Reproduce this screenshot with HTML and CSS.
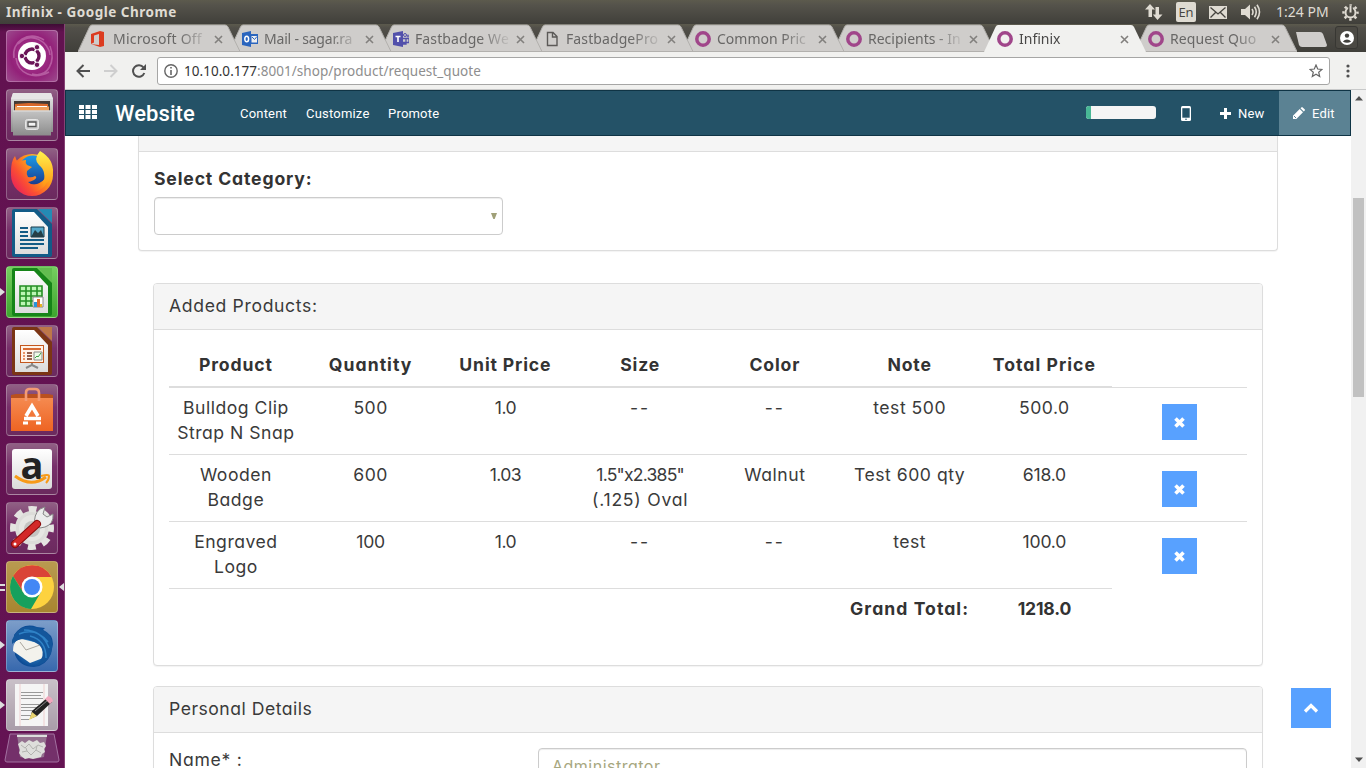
FILE: index.html
```html
<!DOCTYPE html>
<html lang="en">
<head>
<meta charset="utf-8">
<title>Infinix</title>
<link rel="stylesheet" href="styles.css">
</head>
<body>
<svg class="defs" aria-hidden="true">
  <defs>
    <linearGradient id="gray" x1="0" y1="0" x2="0" y2="1"><stop offset="0" stop-color="#c4c4c4"/><stop offset="1" stop-color="#8c8c8c"/></linearGradient>
    <linearGradient id="graytop" x1="0" y1="0" x2="0" y2="1"><stop offset="0" stop-color="#e8e8e8"/><stop offset=".3" stop-color="#cfcfcf"/><stop offset="1" stop-color="#8c8c8c"/></linearGradient>
    <linearGradient id="paper" x1="0" y1="0" x2="0" y2="1"><stop offset="0" stop-color="#fff"/><stop offset="1" stop-color="#dcdcdc"/></linearGradient>
    <linearGradient id="fox" x1="1" y1="0" x2="0" y2=".8"><stop offset="0" stop-color="#fff04a"/><stop offset=".4" stop-color="#ff9a1a"/><stop offset=".7" stop-color="#fb5032"/><stop offset="1" stop-color="#e8205a"/></linearGradient>
    <linearGradient id="flame" x1="0" y1="0" x2="0" y2="1"><stop offset="0" stop-color="#fff34d"/><stop offset="1" stop-color="#ff9a16"/></linearGradient>
    <linearGradient id="globe" x1="0" y1="0" x2="0" y2="1"><stop offset="0" stop-color="#1c9be8"/><stop offset="1" stop-color="#1a3c8f"/></linearGradient>
    <linearGradient id="bag" x1="0" y1="0" x2="0" y2="1"><stop offset="0" stop-color="#f58a50"/><stop offset="1" stop-color="#ee6423"/></linearGradient>
    <radialGradient id="bird"><stop offset="0" stop-color="#4ba3dc"/><stop offset="1" stop-color="#0c4b95"/></radialGradient>
    <g id="x"><path d="M1 1l7 7M8 1l-7 7" stroke="#82807e" stroke-width="1.6" fill="none"/></g>
    <path id="shape" d="M0 28L11.500 3Q12.500 1 14 1H147Q149 1 150 3L162 28Z"/>
    <path id="edge" d="M0 27.500L11.500 3Q12.500 1 14 1H147Q149 1 150 3L162 27.500Z"/>
  </defs>
</svg>

<header class="panelbar">
  <span class="win-title">Infinix - Google Chrome</span>
  <div class="tray">
    <svg class="t-net" width="18" height="16" viewBox="0 0 18 16"><path d="M5 0l5 5.500H7V13H3.500V5.500H0ZM10.500 3H14v7.500h3.500L12.500 16 7.800 10.500h2.700Z" fill="#dfdbd2"/></svg>
    <span class="t-en">En</span>
    <svg class="t-mail" width="18" height="13" viewBox="0 0 18 13"><rect width="18" height="13" fill="#dfdbd2"/><path d="M1.500 1.500L9 8l7.500-6.500M1.500 11.500l5-5M16.500 11.500l-5-5" stroke="#45433e" fill="none" stroke-width="1.300"/></svg>
    <svg class="t-vol" width="20" height="16" viewBox="0 0 20 16"><path d="M0 5h4l5-4.500v15L4 11H0Z" fill="#dfdbd2"/><path d="M11 5q2 3 0 6M13.500 2.800q3.500 5.200 0 10.400M16 .8q5 7.200 0 14.400" stroke="#dfdbd2" stroke-width="1.600" fill="none"/></svg>
    <span class="t-time">1:24 PM</span>
    <svg class="t-gear" width="17" height="17" viewBox="0 0 17 17"><circle cx="8.500" cy="8.500" r="7" fill="none" stroke="#dfdbd2" stroke-width="2.400" stroke-dasharray="2.500 2.998" stroke-dashoffset="1.250"/><circle cx="8.500" cy="8.500" r="5" fill="none" stroke="#dfdbd2" stroke-width="2"/><path d="M8.500 1.500v6.500" stroke="#48463f" stroke-width="4.600"/><path d="M8.500 1.500v7" stroke="#dfdbd2" stroke-width="2"/></svg>
  </div>
</header>

<div class="desk">
  <nav class="launcher">
    <div class="tile ubuntu"><svg viewBox="0 0 52 52"><path d="M8 28C5 12 22 0 38 10M26 44C42 48 50 32 44 16M12 14C25 0 43 12 44 25M10 28c2 16 18 22 33 14" stroke="#d692c6" stroke-width="1.600" opacity=".5" fill="none"/><circle cx="26" cy="26" r="14" fill="#fff"/><circle cx="26" cy="26" r="7" fill="none" stroke="#6a1457" stroke-width="3.400"/><path d="M21 26h-7M28.500 21.700l3-5M28.500 30.300l3 5" stroke="#fff" stroke-width="1.600"/><g fill="#6a1457" stroke="#fff" stroke-width=".9"><circle cx="15.900" cy="26" r="2.700"/><circle cx="31" cy="17.200" r="2.700"/><circle cx="31" cy="34.800" r="2.700"/></g></svg></div>
    <div class="tile"><svg viewBox="0 0 52 52"><path d="M7 4h38l2 6v33H5V10Z" fill="url(#graytop)"/><path d="M5 10l2-6h38l2 6Z" fill="#e6e6e6"/><path d="M8 12h36v11H8z" fill="#443b36"/><path d="M9 15l14-1 19 1v8H9z" fill="#d9682a"/><path d="M9 17.500h34v5H9z" fill="#f0a05a"/><path d="M11 17.500h30" stroke="#fff"/><path d="M7 21.500h38v25H7z" fill="url(#gray)"/><path d="M7 22h38" stroke="#e0e0e0"/><rect x="19.500" y="30.500" width="13" height="10" rx="2" fill="#cfcfcf" stroke="#e6e6e6"/><path d="M22 33h8v4.500h-8z" fill="#f4f4f4" stroke="#555" stroke-width="1.300"/></svg></div>
    <div class="tile"><svg viewBox="0 0 52 52"><circle cx="26" cy="27" r="21" fill="url(#fox)"/><circle cx="27" cy="22" r="14.500" fill="url(#globe)"/><path d="M5 24Q5 13 9 8q1 4 3 6 4-2 8-2-1 3 1 5l5 2-5 4q-1 3 1 6 4 1 7-1 3 1-1 4-4 2-6 2 4 4 10 2 5-2 7-5 3 6-4 10-5 4-14 4Q8 43 5 24Z" fill="url(#fox)"/><path d="M34 3q-7 8-1 14 8 6 4 20 9-4 10-12Q48 11 34 3Z" fill="url(#flame)"/></svg></div>
    <div class="tile"><svg viewBox="0 0 52 52"><path d="M6 4q0-2 2-2h23l15 15v31q0 2-2 2H8q-2 0-2-2Z" fill="#125b87"/><path d="M32 2h14v14Z" fill="#248bb4"/><path d="M9 5h19l14 15v27H9Z" fill="url(#paper)"/><path d="M14 21h8M14 25h8M14 29h8M14 33h24M14 37h24M14 41h18" stroke="#135b85" stroke-width="2"/><path d="M25 20h13v10H25z" fill="#54a8ca" stroke="#173a4d"/><path d="M25 30l4-7 3 3 3-3 3 7" fill="#263f47"/></svg></div>
    <div class="tile calc"><svg viewBox="0 0 52 52"><path d="M6 4q0-2 2-2h23l15 15v31q0 2-2 2H8q-2 0-2-2Z" fill="#168418"/><path d="M32 2h14v14Z" fill="#62bc4f"/><path d="M9 5h19l14 15v27H9Z" fill="url(#paper)"/><path d="M14 20h22v20H14z" fill="#bdf6b4"/><path d="M14 20h22v20H14zM14 25h22M14 30h22M14 35h22M20 20v20M25 20v20M31 20v20" stroke="#258f25" stroke-width="1.600" fill="none"/><path d="M27 31h10v10H27z" fill="#fff" stroke="#888"/><path d="M28 41v-5h3v5z" fill="#2894dc"/><path d="M31 41v-8h3v8z" fill="#e26a2d"/><path d="M34 41v-3h2v3z" fill="#e7b525"/></svg></div>
    <div class="tile"><svg viewBox="0 0 52 52"><path d="M6 4q0-2 2-2h23l15 15v31q0 2-2 2H8q-2 0-2-2Z" fill="#7b3515"/><path d="M32 2h14v14Z" fill="#bd7749"/><path d="M9 5h19l14 15v27H9Z" fill="url(#paper)"/><rect x="14.500" y="20.500" width="23" height="17" fill="#fff3e8" stroke="#c3571e"/><path d="M17 24h18" stroke="#d86b33" stroke-width="2"/><path d="M17 28h2M17 31h2M17 34h2" stroke="#e99465" stroke-width="2"/><path d="M21 28h5M21 31h5M21 34h5" stroke="#713117" stroke-width="1.500"/><path d="M28 27h8v8h-8z" fill="#edfae9" stroke="#888"/><path d="M29 33l2-2 1 1 3-4" stroke="#3ba343" fill="none"/><path d="M26 38v2l-6 3M26 40l6 3" stroke="#888" stroke-width="2" fill="none"/></svg></div>
    <div class="tile"><svg viewBox="0 0 52 52"><path d="M5 11l5-1h32l5 1v6H5z" fill="#b9501f"/><path d="M5 14h42v33H5z" fill="url(#bag)"/><path d="M20 17V9q0-4 3-4h6q4 0 4 4v8" stroke="#f39b74" stroke-width="2.600" fill="none"/><path d="M20 32l6-10 6 10M18 34.500h17" stroke="#fff" stroke-width="3.600" fill="none"/><path d="M17 39h5M30 39h5" stroke="#fff" stroke-width="3" fill="none"/></svg></div>
    <div class="tile"><div class="amz">a</div><svg class="smile" viewBox="0 0 52 52"><path d="M9 33q16 12 31 1" stroke="#f79a18" stroke-width="3" fill="none"/><path d="M35 33q8-2 8 0 0 4-3 7" stroke="#f79a18" stroke-width="2" fill="none"/></svg></div>
    <div class="tile"><svg viewBox="0 0 52 52"><circle cx="26" cy="26" r="15" fill="#e6e6e3" stroke="#dcdcd9" stroke-width="4"/><circle cx="26" cy="26" r="19" fill="none" stroke="#e4e4e1" stroke-width="6" stroke-dasharray="8 6.920" stroke-dashoffset="4"/><circle cx="26" cy="27" r="8" fill="#c4c4c2"/><path d="M29 23Q27 13 34 7l5-2-2 7 4 3 6-3q1 10-8 13l-5 1Z" fill="#ececec" stroke="#888"/><path d="M9 42l22-20" stroke="#8a0b0b" stroke-width="8" stroke-linecap="round"/><path d="M9 42l22-20" stroke="#d32929" stroke-width="6" stroke-linecap="round"/><circle cx="9" cy="42" r="1.500" fill="#fff"/></svg></div>
    <div class="tile chrome"><svg viewBox="0 0 52 52"><circle cx="26" cy="26" r="22" fill="#fdd23f"/><path d="M7 15A22 22 0 0 1 45.500 16H26L17 31Z" fill="#da4437"/><path d="M7 15a22 22 0 0 0 18 33l10-17H17Z" fill="#17a05d"/><circle cx="26" cy="26" r="10.500" fill="#fff"/><circle cx="26" cy="26" r="8" fill="#4387f5"/></svg><i class="dbl"></i><i class="arrow-r"></i></div>
    <div class="tile bird"><svg viewBox="0 0 52 52"><path d="M8 15Q17 2 31 7l8 1-2 2q10 4 10 14l-2 10q-5 12-17 13-14 0-19-12Z" fill="url(#bird)"/><path d="M7 31q0-12 9-12l20 5 1 14-13 5Z" fill="#f3f2ec"/><path d="M14 22l6 8 14-5" stroke="#aaa69d" fill="none"/><path d="M6 20l3-6Q17 3 31 8q17 4 15 21-3 14-17 17 8-6 8-14-2-9-14-12-9-3-17 4Z" fill="#14569b"/><path d="M13 14q17-7 29 8M18 10q18 0 25 18M24 16q16 4 16 22" stroke="#2f82c6" stroke-width="1.500" fill="none"/></svg></div>
    <div class="tile edit-app"><svg viewBox="0 0 52 52"><path d="M9 5h33v42H9z" fill="#f5f5f5"/><path d="M14 5v42M38 5v42" stroke="#eec0c0" stroke-width=".7"/><path d="M15 13.500h22M15 16.500h20M15 19.500h22M15 25.500h18M15 28.500h22M15 31.500h14M15 36.500h10M15 40.500h8" stroke="#999"/><path d="M24 40l2-8 15-13 5 4-15 14Z" fill="#222"/><path d="M23 41l3-8 5 4Z" fill="#e7d36f"/><path d="M29 32l13-11" stroke="#888"/><path d="M39 20l3-3q4 1 5 5l-3 3Z" fill="#f2a7bd"/></svg><i class="arrow-l"></i></div>
    <svg class="trash" viewBox="0 0 56 30"><path d="M6 1h44l5 26q0 2-2 2H3q-2 0-2-2Z" fill="#74306a" stroke="#a270a0"/><path d="M13 1h30l-3 23q-12 3-24 0Z" fill="#94718f"/><path d="M13 2h30v2H13z" fill="#ddd"/><path d="M14 11l4-3 3 2 4-3 4 2 4-2 3 3 4-1 2 4-2 3 1 3-3 2-1 3-4 1-4 1-4-1-4 1-4-3-2-3 1-3Z" fill="#dededb"/><path d="M17 12l4 3 4-4 4 5 5-4 5 2M18 19l5-1 4 4 5-5 5 3M22 15l1 3M33 13l-1 4" stroke="#b3b3b0" fill="none"/></svg>
  </nav>

  <main class="browser">
    <div class="tabstrip">
      <div class="tab z8"><svg class="bg" viewBox="0 0 162 28"><use href="#shape"/><use href="#edge"/></svg><svg class="fav" viewBox="0 0 16 16"><path d="M0 3l9-3 4 1v14l-4 1-9-3 8 1V3L3 4.500v7L0 13Z" fill="#dc3c20"/></svg><span class="tt w1">Microsoft Off</span><svg class="close" viewBox="0 0 9 9"><use href="#x"/></svg></div>
      <div class="tab z7"><svg class="bg" viewBox="0 0 162 28"><use href="#shape"/><use href="#edge"/></svg><svg class="fav" viewBox="0 0 16 16"><path d="M0 2l9-2v16l-9-2Z" fill="#2a65be"/><path d="M9 3h7v10H9Z" fill="#2a65be"/><path d="M9.500 5h5.500v6.500H9.500z" fill="#eee"/><path d="M10 6l2.500 2.500L15 5.500" stroke="#2a65be" fill="none"/><ellipse cx="4.700" cy="8" rx="1.900" ry="2.800" fill="none" stroke="#fff" stroke-width="1.500"/></svg><span class="tt w2">Mail - sagar.ra</span><svg class="close" viewBox="0 0 9 9"><use href="#x"/></svg></div>
      <div class="tab z6"><svg class="bg" viewBox="0 0 162 28"><use href="#shape"/><use href="#edge"/></svg><svg class="fav" viewBox="0 0 16 16"><path d="M0 2l10-2v16L0 14Z" fill="#5250ab"/><path d="M2.500 5.500h5M5 5.500V11" stroke="#fff" stroke-width="1.600"/><circle cx="12" cy="4" r="1.500" fill="none" stroke="#5250ab"/><circle cx="15" cy="5" r="1" fill="none" stroke="#5250ab"/><path d="M10 7.500h6v4h-6M10 13h3V8" stroke="#5250ab" fill="none" stroke-width="1.300"/></svg><span class="tt w3">Fastbadge We</span><svg class="close" viewBox="0 0 9 9"><use href="#x"/></svg></div>
      <div class="tab z5"><svg class="bg" viewBox="0 0 162 28"><use href="#shape"/><use href="#edge"/></svg><svg class="fav" viewBox="0 0 16 16"><path d="M3.500 1.500h5.500l4 4v9H3.500ZM8.500 1.500V6H13" stroke="#5c5a58" stroke-width="1.400" fill="none"/></svg><span class="tt w4">FastbadgePro</span><svg class="close" viewBox="0 0 9 9"><use href="#x"/></svg></div>
      <div class="tab z4"><svg class="bg" viewBox="0 0 162 28"><use href="#shape"/><use href="#edge"/></svg><svg class="fav" viewBox="0 0 16 16"><circle cx="8" cy="8" r="6.200" stroke="#a0468a" stroke-width="3.500" fill="none"/></svg><span class="tt w5">Common Pric</span><svg class="close" viewBox="0 0 9 9"><use href="#x"/></svg></div>
      <div class="tab z3"><svg class="bg" viewBox="0 0 162 28"><use href="#shape"/><use href="#edge"/></svg><svg class="fav" viewBox="0 0 16 16"><circle cx="8" cy="8" r="6.200" stroke="#a0468a" stroke-width="3.500" fill="none"/></svg><span class="tt w6">Recipients - In</span><svg class="close" viewBox="0 0 9 9"><use href="#x"/></svg></div>
      <div class="tab active"><svg class="bg" viewBox="0 0 162 28"><use href="#shape"/></svg><svg class="fav" viewBox="0 0 16 16"><circle cx="8" cy="8" r="6.200" stroke="#a0468a" stroke-width="3.500" fill="none"/></svg><span class="tt w7">Infinix</span><svg class="close" viewBox="0 0 9 9"><use href="#x"/></svg></div>
      <div class="tab z1"><svg class="bg" viewBox="0 0 162 28"><use href="#shape"/><use href="#edge"/></svg><svg class="fav" viewBox="0 0 16 16"><circle cx="8" cy="8" r="6.200" stroke="#a0468a" stroke-width="3.500" fill="none"/></svg><span class="tt w8">Request Quo</span><svg class="close" viewBox="0 0 9 9"><use href="#x"/></svg></div>
      <svg class="newtab" width="33" height="15" viewBox="0 0 33 15"><path d="M1 0h24q2 0 3 2l4 11q0 2-2 2H7q-2 0-3-2Z" fill="#cfcdcb"/></svg>
      <div class="profile"><svg width="14" height="14" viewBox="0 0 14 14"><circle cx="7" cy="7" r="7" fill="#fff"/><circle cx="7" cy="4.600" r="2.200" fill="#42413d"/><path d="M2.800 10.500Q7 6.500 11.200 10.500Q7 13 2.800 10.500Z" fill="#42413d"/></svg></div>
    </div>
    <div class="toolbar">
      <svg width="14" height="14" viewBox="0 0 14 14"><path d="M14 7H2M7.500 1L1.500 7l6 6" stroke="#505050" stroke-width="2" fill="none"/></svg>
      <svg width="14" height="14" viewBox="0 0 14 14"><path d="M0 7h12M6.500 1l6 6-6 6" stroke="#cfcfcf" stroke-width="2" fill="none"/></svg>
      <svg width="14" height="14" viewBox="0 0 14 14"><path d="M12.300 9A5.800 5.800 0 1 1 11.500 3.500" stroke="#505050" stroke-width="2" fill="none"/><path d="M14 0v6H8Z" fill="#505050"/></svg>
      <div class="omnibox">
        <svg width="14" height="14" viewBox="0 0 14 14"><circle cx="7" cy="7" r="6.200" fill="none" stroke="#666" stroke-width="1.400"/><path d="M7 6v5M7 3v1.600" stroke="#666" stroke-width="1.600"/></svg>
        <span class="url"><b>10.10.0.177</b>:8001/shop/product/request_quote</span>
        <svg class="star" width="14" height="14" viewBox="0 0 14 14"><path d="M7 1l1.700 4 4.300.4-3.300 2.800 1 4.300L7 10.200l-3.700 2.300 1-4.300L1 5.400 5.300 5Z" stroke="#666" stroke-width="1.200" fill="none"/></svg>
      </div>
      <svg class="dots" width="4" height="14" viewBox="0 0 4 14"><g fill="#505050"><circle cx="2" cy="2" r="1.600"/><circle cx="2" cy="7" r="1.600"/><circle cx="2" cy="12" r="1.600"/></g></svg>
    </div>

    <div class="view">
      <div class="page">
        <nav class="odoo">
          <svg class="apps" width="18" height="14" viewBox="0 0 18 14"><path d="M0 0h5v4H0zM6.500 0h5v4h-5zM13 0h5v4h-5zM0 5h5v4H0zM6.500 5h5v4h-5zM13 5h5v4h-5zM0 10h5v4H0zM6.500 10h5v4h-5zM13 10h5v4h-5z" fill="#fff"/></svg>
          <span class="brand">Website</span>
          <span class="m1">Content</span><span class="m2">Customize</span><span class="m3">Promote</span>
          <div class="right">
            <div class="progress"><i></i></div>
            <svg class="phone" width="10" height="15" viewBox="0 0 10 15"><rect width="10" height="15" rx="1.500" fill="#fff"/><path d="M1.300 2.200h7.400v9.500H1.300z" fill="#245267"/><circle cx="5" cy="13.300" r=".8" fill="#245267"/></svg>
            <svg class="plus" width="11" height="11" viewBox="0 0 11 11"><path d="M4 0h3v4h4v3H7v4H4V7H0V4h4z" fill="#fff"/></svg>
            <span class="new">New</span>
            <div class="editbtn"><svg width="12" height="12" viewBox="0 0 12 12"><path d="M0 12V8.700L6.700 2 10 5.300 3.300 12ZM7.500 1.200 8.300.4q.7-.7 1.400 0l1.900 1.900q.7.700 0 1.400l-.8.800Z" fill="#fff"/><path d="M1 9l2 2" stroke="#5b8293"/></svg><span>Edit</span></div>
          </div>
        </nav>
        <div class="content">
          <section class="card first">
            <div class="card-head"></div>
            <div class="card-body"><label class="cat">Select Category:</label><div class="select"><svg width="6" height="6" viewBox="0 0 6 6"><path d="M0 0h6L3.700 6H2.300Z" fill="#a0a078"/></svg></div></div>
          </section>
          <section class="card added">
            <div class="card-head"><span class="h-added">Added Products:</span></div>
            <div class="table">
              <div class="tr th"><div>Product</div><div class="wide">Quantity</div><div>Unit Price</div><div>Size</div><div>Color</div><div>Note</div><div class="wide">Total Price</div><div class="thin"></div></div>
              <div class="tr"><div>Bulldog Clip<br>Strap N Snap</div><div>500</div><div class="tight">1.0</div><div class="dash">--</div><div class="dash">--</div><div>test 500</div><div>500.0</div><div><button class="del"><svg viewBox="0 0 11 11"><path d="M1.500 1.500l8 8M9.500 1.500l-8 8"/></svg></button></div></div>
              <div class="tr"><div>Wooden<br>Badge</div><div>600</div><div class="tight">1.03</div><div><span class="dim">1.5"x2.385"</span><br><span class="oval">(.125) Oval</span></div><div>Walnut</div><div>Test 600 qty</div><div class="num">618.0</div><div><button class="del"><svg viewBox="0 0 11 11"><path d="M1.500 1.500l8 8M9.500 1.500l-8 8"/></svg></button></div></div>
              <div class="tr"><div>Engraved<br>Logo</div><div class="num">100</div><div class="tight">1.0</div><div class="dash">--</div><div class="dash">--</div><div>test</div><div class="num">100.0</div><div class="open"><button class="del"><svg viewBox="0 0 11 11"><path d="M1.500 1.500l8 8M9.500 1.500l-8 8"/></svg></button></div></div>
              <div class="tr total"><div></div><div></div><div></div><div></div><div></div><div class="wide">Grand Total:</div><div class="num">1218.0</div><div></div></div>
            </div>
          </section>
          <section class="card personal">
            <div class="card-head"><span class="h-pers">Personal Details</span></div>
            <div class="form-row"><span class="name">Name* :</span><div class="input">Administrator</div></div>
          </section>
        </div>
        <a class="totop"><svg width="16" height="10" viewBox="0 0 16 10"><path d="M2 8.500l6-6 6 6" stroke="#fff" stroke-width="3.200" fill="none"/></svg></a>
      </div>
      <div class="scroll"><svg width="8" height="5" viewBox="0 0 8 5"><path d="M0 4.500L4 0l4 4.500Z" fill="#505050"/></svg><i></i><svg width="8" height="5" viewBox="0 0 8 5"><path d="M0 .5h8L4 5Z" fill="#505050"/></svg></div>
    </div>
  </main>
</div>
<i class="run run1"></i><i class="run run2"></i>
</body>
</html>
```
FILE: styles.css
```css
* { box-sizing: border-box; }
body { margin: 0; width: 1366px; height: 768px; overflow: hidden; background: #fff; display: flex; flex-direction: column; font-family: "Open Sans", sans-serif; position: relative; }
svg { display: block; flex: none; }
.defs { position: absolute; width: 0; height: 0; }

/* desktop bar */
.panelbar { height: 24px; flex: none; display: flex; align-items: center; justify-content: space-between; background: linear-gradient(#5c5a4d, #55534b 20%, #403f3a); color: #dfdbd2; padding-left: 6px; }
.win-title { font: bold 13.500px/24px "Noto Sans", sans-serif; letter-spacing: .52px; white-space: nowrap; }
.tray { display: flex; align-items: center; height: 24px; }
.t-net { margin-right: 13px; }
.t-en { width: 20px; height: 20px; background: #dfdbd2; color: #45433e; border-radius: 2px; font-size: 13px; line-height: 20px; text-align: center; margin-right: 13px; }
.t-mail { margin-right: 14px; }
.t-vol { margin-right: 15px; }
.t-time { width: 52px; font: 14px/24px "Noto Sans", sans-serif; white-space: nowrap; letter-spacing: 0; }
.t-gear { margin: 0 7px 0 14px; }

.desk { flex: 1; display: flex; min-height: 0; }

/* launcher */
.launcher { width: 65px; background: linear-gradient(#3e0c35, #621250 8px, #641353); border-right: 1px solid #864275; padding: 6px 0 0 6px; display: flex; flex-direction: column; flex: none; }
.tile { width: 52px; height: 52px; margin-bottom: 7px; flex: none; border-radius: 4px; border: 1px solid rgba(255,255,255,.25); background: linear-gradient(#906084, #772f6a 45%, #6b2a5e); position: relative; }
.tile svg { width: 52px; height: 52px; margin: -1px; }
.ubuntu { background: radial-gradient(circle, #ae3a95, #932179 60%, #9c4a8d); }
.calc { background: linear-gradient(#76ce60, #3da52e); }
.chrome { background: linear-gradient(#b99a50, #a88530); }
.bird { background: linear-gradient(#7c9dc9, #3768ad); }
.edit-app { background: linear-gradient(#c9c0c8, #a99da9); margin-bottom: 2px; }
.amz { width: 40px; height: 40px; margin: 5px; border-radius: 3px; background: linear-gradient(#fff, #dadada); font: bold 38px/30px "Open Sans", sans-serif; text-align: center; color: #222; }
.tile .smile { position: absolute; left: 0; top: 0; }
.trash { width: 56px; height: 30px; margin-left: -2px; }
.arrow-l, .run { position: absolute; left: 0; width: 0; height: 0; border: 4px solid transparent; border-left: 5px solid #ddd; border-right: 0; }
.arrow-l { left: -7px; top: 21px; }
.run1 { top: 288px; }
.run2 { top: 641px; }
.dbl { position: absolute; left: -7px; top: 22px; width: 5px; height: 7px; border-top: 2px solid #ddd; border-bottom: 2px solid #ddd; }
.arrow-r { position: absolute; left: 52px; top: 21px; border: 4px solid transparent; border-right: 5px solid #ddd; border-left: 0; }

/* browser frame */
.browser { flex: 1; min-width: 0; display: flex; flex-direction: column; }
.tabstrip { height: 28px; flex: none; background: linear-gradient(#5c5a4d, #514f49 4px, #403f3a); display: flex; padding-left: 13px; position: relative; }
.tab { width: 151px; height: 28px; flex: none; position: relative; display: flex; align-items: center; padding-left: 13px; isolation: isolate; color: #686766; }
.tab .bg { position: absolute; left: 0; top: 0; width: 162px; height: 28px; z-index: -1; fill: #cfcdcb; }
.bg use:nth-child(2) { fill: none; stroke: #b2b0ad; }
.tab.active { color: #494847; z-index: 9; }
.tab.active .bg { fill: #f1f1ef; }
.z8 { z-index: 8; } .z7 { z-index: 7; } .z6 { z-index: 6; } .z5 { z-index: 5; } .z4 { z-index: 4; } .z3 { z-index: 3; } .z1 { z-index: 1; }
.fav { width: 16px; height: 16px; margin: 2px 6px 0 0; }
.tt { width: 101px; height: 28px; font: 14px/30px "Noto Sans", sans-serif; white-space: nowrap; -webkit-mask-image: linear-gradient(90deg, #000 65px, transparent 98px); mask-image: linear-gradient(90deg, #000 65px, transparent 98px); }
.w1 { letter-spacing: .2px; }
.w2 { letter-spacing: -.2px; }
.w3, .w4, .w8 { letter-spacing: .1px; }
.close { width: 9px; height: 9px; margin: 2px 0 0 0; }
.newtab { margin: 8px 0 0 9px; }
.profile { width: 23px; height: 23px; margin: 2px 0 0 7px; border: 1px solid #383733; border-radius: 3px; background: #4b4943; display: flex; align-items: center; justify-content: center; }
.toolbar { height: 38px; flex: none; display: flex; align-items: center; background: #f1f1ef; border-bottom: 1px solid #c8c9c9; padding: 0 0 0 11px; }
.toolbar > svg { margin-right: 14px; }
.toolbar > svg:nth-child(3) { margin-right: 11px; }
.omnibox { width: 1173px; height: 28px; border: 1px solid #a6a6a5; border-radius: 3px; background: #fff; display: flex; align-items: center; padding: 0 6px; }
.url { font: 13.500px/26px "Noto Sans", sans-serif; letter-spacing: .04px; color: #8e8e8e; margin-left: 6px; white-space: nowrap; }
.url b { font-weight: 400; color: #333; }
.star { margin-left: auto; }
.toolbar > .dots { margin: 0 0 0 16px; }

.view { flex: 1; min-height: 0; display: flex; }
.page { width: 1286px; position: relative; overflow: hidden; }
.scroll { width: 15px; background: #f1f1f1; display: flex; flex-direction: column; align-items: center; padding: 6px 0; }
.scroll i { width: 11px; height: 199px; background: #c1c1c1; margin: 97px 0 auto; }

/* website navbar */
.odoo { height: 46px; background: #245267; border: 1px solid #0f3445; color: #fff; display: flex; align-items: center; font: 13px/44px Roboto, sans-serif; padding-left: 13px; letter-spacing: .2px; }
.apps { margin: -3px 18px 0 0; }
.odoo span { white-space: nowrap; padding-top: 1px; }
.brand { width: 125px; font-size: 22px; letter-spacing: .1px; font-weight: 500; }
.m1 { width: 66px; } .m2 { width: 82px; }
.right { margin-left: auto; display: flex; align-items: center; }
.progress { width: 70px; height: 13px; background: #f5f5f5; border-radius: 3px; overflow: hidden; margin: -2px 25px 0 0; }
.progress i { display: block; width: 5px; height: 13px; background: #48b795; }
.phone { margin-right: 29px; }
.plus { margin-right: 7px; }
.new { width: 41px; }
.editbtn { width: 71px; height: 44px; background: #5b8293; display: flex; align-items: center; padding-left: 14px; gap: 7px; }

/* page content */
.content { font: 17.600px/25px Inter, sans-serif; font-feature-settings: "cv11"; letter-spacing: .5px; color: #3a3a3a; }
.card { border: 1px solid #ddd; border-radius: 4px; box-shadow: 0 1px 1px rgba(0,0,0,.05); background: #fff; }
.card-head { background: #f5f5f5; border-bottom: 1px solid #ddd; height: 46px; padding: 9px 15px; border-radius: 3px 3px 0 0; }
.first { width: 1140px; height: 115px; margin-left: 73px; border-top: 0; border-radius: 0 0 4px 4px; }
.first .card-head { height: 16px; padding: 0; border-radius: 0; }
.card-body { padding: 14px 15px; }
.cat { display: block; font-weight: 700; height: 31px; white-space: nowrap; letter-spacing: .85px; color: #333; }
.select { width: 349px; height: 38px; border: 1px solid #ccc; border-radius: 4px; box-shadow: inset 0 1px 1px rgba(0,0,0,.075); display: flex; align-items: center; justify-content: flex-end; padding-right: 5px; }
.h-added { letter-spacing: .65px; }
.added { width: 1110px; height: 383px; margin: 32px 0 20px 88px; }
.personal { width: 1110px; height: 120px; margin-left: 88px; }
.table { margin: 15px 15px 0; }
.tr { display: grid; grid-template-columns: repeat(8, 134.750px); height: 67px; text-align: center; }
.tr > div { border-bottom: 1px solid #ddd; padding-top: 7px; white-space: nowrap; }
.tr > div:nth-child(-n+7) { padding-right: 1px; }
.th { height: 43px; font-weight: 700; letter-spacing: .85px; color: #333; }
.tr.th > div { border-bottom-width: 2px; }
.tr.th > .thin { border-bottom-width: 1px; }
.tr > .open, .tr.total > div { border-bottom: 0; }
.total { font-weight: 700; color: #333; }
.wide { letter-spacing: 1.050px; }
.num { letter-spacing: -.2px; }
.tight { letter-spacing: -.6px; }
.dash { letter-spacing: 2px; }
.dim { letter-spacing: -.8px; }
.oval { letter-spacing: .75px; }
.del { display: block; width: 35px; height: 36px; border: 0; padding: 0; margin: 9px auto 0; background: #58a1ff; }
.del svg { width: 11px; height: 11px; margin: 0 auto; stroke: #fff; stroke-width: 3.600px; }
.form-row { display: flex; padding: 15px; line-height: 24px; }
.name { width: 369px; height: 20px; letter-spacing: .7px; }
.input { width: 709px; height: 38px; border: 1px solid #ccc; border-radius: 4px; box-shadow: inset 0 1px 1px rgba(0,0,0,.075); padding: 5px 13px; color: #a7a780; font-size: 16px; letter-spacing: .5px; }
.totop { position: absolute; left: 1226px; top: 598px; width: 40px; height: 40px; background: #58a1ff; display: flex; align-items: center; justify-content: center; }
```
